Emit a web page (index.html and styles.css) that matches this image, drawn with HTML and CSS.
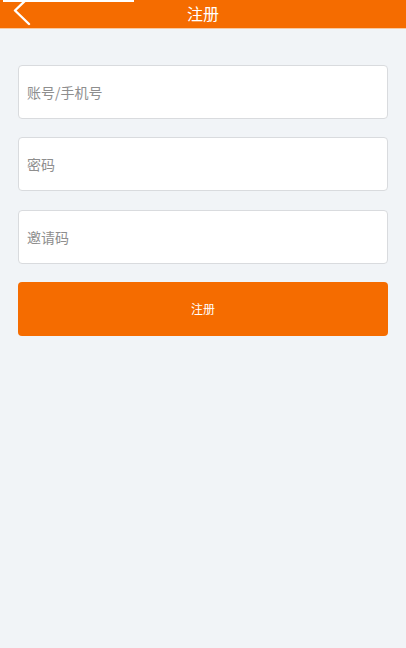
FILE: index.html
```html
<!DOCTYPE html>
<html lang="zh">
<head>
<meta charset="utf-8">
<title>注册</title>
<link rel="stylesheet" href="styles.css">
</head>
<body>
<header class="topbar">
  <span class="statusline"></span>
  <a class="back" href="#" aria-label="返回">
    <svg width="20" height="26" viewBox="0 0 20 26"><path d="M17 -3 L3 10.5 L17 24" fill="none" stroke="#fff" stroke-width="2.4" stroke-linecap="round" stroke-linejoin="round"/></svg>
  </a>
  <h1 class="title">注册</h1>
</header>
<main class="form">
  <input class="field" type="text" placeholder="账号/手机号">
  <input class="field" type="password" placeholder="密码">
  <input class="field" type="text" placeholder="邀请码">
  <button class="submit" type="button">注册</button>
</main>
</body>
</html>
```
FILE: styles.css
```css
* { box-sizing: border-box; }
html, body { margin: 0; padding: 0; }
body {
  background: #f1f4f7;
  font-family: "Noto Sans CJK SC", "Noto Sans", sans-serif;
  width: 406px;
  height: 648px;
}
.topbar {
  position: relative;
  height: 29px;
  background: #f56c00;
  border-bottom: 1px solid #f8c9a0;
  display: flex;
  align-items: flex-start;
  justify-content: center;
}
.statusline {
  position: absolute;
  left: 3px;
  top: 0;
  width: 131px;
  height: 2px;
  background: #fff;
}
.back {
  position: absolute;
  left: 12px;
  top: 0;
  width: 20px;
  height: 26px;
  display: block;
}
.back svg { display: block; }
.title {
  margin: 0;
  font-size: 16px;
  font-weight: normal;
  color: #fff;
  line-height: 26px;
}
.form {
  padding: 36px 18px 0 18px;
  display: flex;
  flex-direction: column;
  gap: 18.34px;
}
.field {
  display: block;
  width: 100%;
  height: 54px;
  border: 1px solid #d9dbde;
  border-radius: 4px;
  background: #fff;
  padding: 0 8px;
  font-family: inherit;
  font-size: 14px;
  color: #333;
  outline: none;
}
.field::placeholder { color: #8e8e8e; }
.submit {
  display: block;
  width: 100%;
  height: 54px;
  border: none;
  border-radius: 4px;
  background: #f56c00;
  color: #fff;
  font-family: inherit;
  font-size: 12px;
  cursor: pointer;
}
```
